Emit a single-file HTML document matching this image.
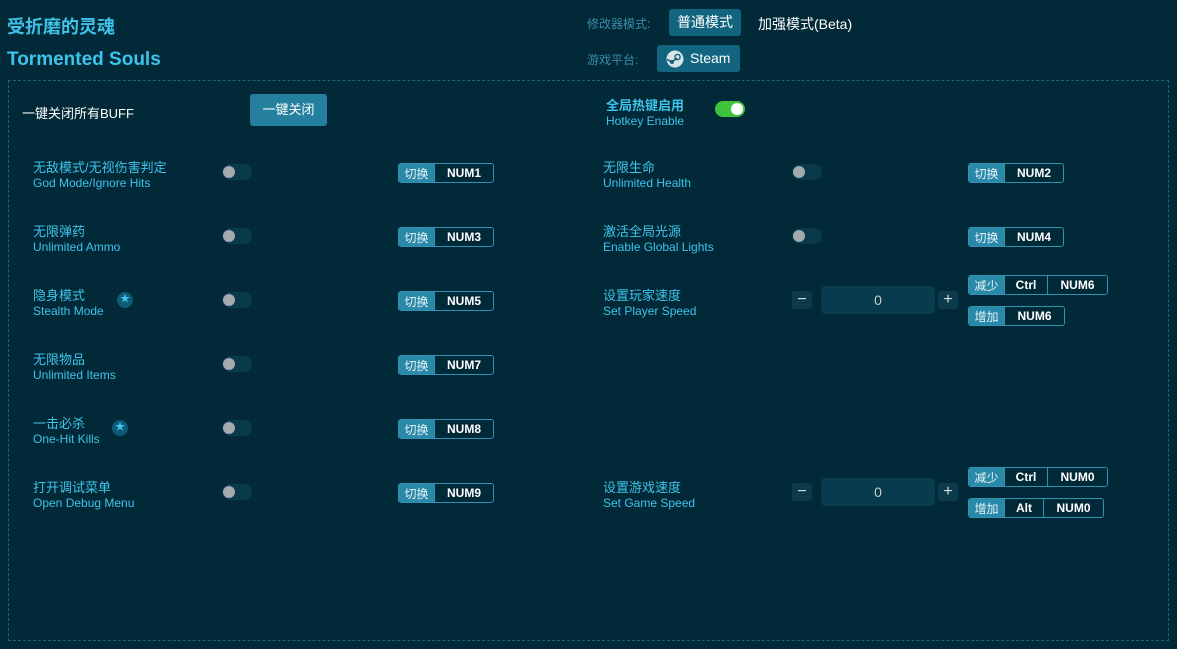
<!DOCTYPE html><html><head><meta charset="utf-8"><style>
*{margin:0;padding:0;box-sizing:border-box}
body{width:1177px;height:649px;background:#022937;font-family:"Liberation Sans","Noto Sans CJK SC",sans-serif;position:relative;overflow:hidden;color:#fff}
.a{position:absolute;white-space:nowrap}
.cy{color:#3fc3ea}
.frame{position:absolute;left:8px;top:80px;width:1161px;height:561px;border:1px dashed #1f6379}
.zh{font-size:13px;color:#3fc3ea}
.en{font-size:12px;color:#3fc3ea}
.tg{position:absolute;width:30px;height:16px;border-radius:8px;background:#083a4b}
.tg:after{content:"";position:absolute;left:1px;top:2px;width:12px;height:12px;border-radius:6px;background:#a3a9ad}
.key{position:absolute;height:20px;display:flex;border:1px solid #2f93b3;border-radius:3px;font-size:12px;font-weight:bold;overflow:hidden}
.key span{display:flex;align-items:center;justify-content:center}
.key .l{background:#2a88a8;color:#e8f4f8;font-weight:normal;width:35px}
.key .v{border-left:1px solid #2f93b3}
.pm{position:absolute;width:20px;height:18px;background:#0b3a4a;border-radius:3px;color:#ddd;font-size:16px;text-align:center;line-height:17px}
.inp{position:absolute;width:114px;height:28px;background:#073b4d;border-radius:4px;color:#ccc;font-size:14px;text-align:center;line-height:28px}
.star{position:absolute;width:16px;height:16px;border-radius:8px;background:#0e5a77;color:#3fc3ea;font-size:10px;text-align:center;line-height:16px}
</style></head><body>
<div class="a cy" style="left:7px;top:13px;font-size:18px;font-weight:bold">受折磨的灵魂</div>
<div class="a cy" style="left:7px;top:49px;font-size:19px;font-weight:bold">Tormented Souls</div>
<div class="a" style="left:587px;top:15px;font-size:12px;color:#3a8ca8">修改器模式:</div>
<div class="a" style="left:669px;top:9px;width:72px;height:27px;background:#12647f;border-radius:3px;font-size:14px;text-align:center;line-height:27px">普通模式</div>
<div class="a" style="left:758px;top:14px;font-size:14px">加强模式(Beta)</div>
<div class="a" style="left:587px;top:51px;font-size:12px;color:#3a8ca8">游戏平台:</div>
<div class="a" style="left:657px;top:45px;width:83px;height:27px;background:#12647f;border-radius:3px;font-size:14px;line-height:27px;padding-left:33px">Steam</div>
<svg class="a" style="left:666px;top:50px" width="18" height="18" viewBox="0 0 18 18"><circle cx="9" cy="9" r="8.5" fill="#d8e4ea"/><circle cx="11.5" cy="7" r="2.6" fill="none" stroke="#12647f" stroke-width="1.4"/><circle cx="6" cy="12" r="2" fill="#12647f"/><path d="M1 9.5L6 12L11 8" stroke="#12647f" stroke-width="1.6" fill="none"/></svg>
<div class="frame"></div>
<div class="a" style="left:22px;top:103px;font-size:13px">一键关闭所有BUFF</div>
<div class="a" style="left:250px;top:94px;width:77px;height:32px;background:#24809e;border-radius:3px;font-size:13px;text-align:center;line-height:32px">一键关闭</div>
<div class="a cy" style="left:606px;top:95px;font-size:13px;font-weight:bold">全局热键启用</div>
<div class="a en" style="left:606px;top:114px">Hotkey Enable</div>
<div class="a" style="left:715px;top:101px;width:30px;height:16px;border-radius:8px;background:#3ec43c"><div style="position:absolute;right:2px;top:2px;width:12px;height:12px;border-radius:6px;background:#fff"></div></div>

<div class="a zh" style="left:33px;top:157px">无敌模式/无视伤害判定</div><div class="a en" style="left:33px;top:176px">God Mode/Ignore Hits</div>
<div class="tg" style="left:222px;top:164px"></div>
<div class="key" style="left:398px;top:163px"><span class="l">切换</span><span class="v" style="width:59px">NUM1</span></div>

<div class="a zh" style="left:33px;top:221px">无限弹药</div><div class="a en" style="left:33px;top:240px">Unlimited Ammo</div>
<div class="tg" style="left:222px;top:228px"></div>
<div class="key" style="left:398px;top:227px"><span class="l">切换</span><span class="v" style="width:59px">NUM3</span></div>

<div class="a zh" style="left:33px;top:285px">隐身模式</div><div class="a en" style="left:33px;top:304px">Stealth Mode</div>
<div class="star" style="left:117px;top:292px">★</div>
<div class="tg" style="left:222px;top:292px"></div>
<div class="key" style="left:398px;top:291px"><span class="l">切换</span><span class="v" style="width:59px">NUM5</span></div>

<div class="a zh" style="left:33px;top:349px">无限物品</div><div class="a en" style="left:33px;top:368px">Unlimited Items</div>
<div class="tg" style="left:222px;top:356px"></div>
<div class="key" style="left:398px;top:355px"><span class="l">切换</span><span class="v" style="width:59px">NUM7</span></div>

<div class="a zh" style="left:33px;top:413px">一击必杀</div><div class="a en" style="left:33px;top:432px">One-Hit Kills</div>
<div class="star" style="left:112px;top:420px">★</div>
<div class="tg" style="left:222px;top:420px"></div>
<div class="key" style="left:398px;top:419px"><span class="l">切换</span><span class="v" style="width:59px">NUM8</span></div>

<div class="a zh" style="left:33px;top:477px">打开调试菜单</div><div class="a en" style="left:33px;top:496px">Open Debug Menu</div>
<div class="tg" style="left:222px;top:484px"></div>
<div class="key" style="left:398px;top:483px"><span class="l">切换</span><span class="v" style="width:59px">NUM9</span></div>

<div class="a zh" style="left:603px;top:157px">无限生命</div><div class="a en" style="left:603px;top:176px">Unlimited Health</div>
<div class="tg" style="left:792px;top:164px"></div>
<div class="key" style="left:968px;top:163px"><span class="l">切换</span><span class="v" style="width:59px">NUM2</span></div>

<div class="a zh" style="left:603px;top:221px">激活全局光源</div><div class="a en" style="left:603px;top:240px">Enable Global Lights</div>
<div class="tg" style="left:792px;top:228px"></div>
<div class="key" style="left:968px;top:227px"><span class="l">切换</span><span class="v" style="width:59px">NUM4</span></div>

<div class="a zh" style="left:603px;top:285px">设置玩家速度</div><div class="a en" style="left:603px;top:304px">Set Player Speed</div>
<div class="pm" style="left:792px;top:291px">−</div><div class="inp" style="left:821px;top:286px">0</div><div class="pm" style="left:938px;top:291px">+</div>
<div class="key" style="left:968px;top:275px"><span class="l">减少</span><span class="v" style="width:43px">Ctrl</span><span class="v" style="width:60px">NUM6</span></div>
<div class="key" style="left:968px;top:306px"><span class="l">增加</span><span class="v" style="width:60px">NUM6</span></div>

<div class="a zh" style="left:603px;top:477px">设置游戏速度</div><div class="a en" style="left:603px;top:496px">Set Game Speed</div>
<div class="pm" style="left:792px;top:483px">−</div><div class="inp" style="left:821px;top:478px">0</div><div class="pm" style="left:938px;top:483px">+</div>
<div class="key" style="left:968px;top:467px"><span class="l">减少</span><span class="v" style="width:43px">Ctrl</span><span class="v" style="width:60px">NUM0</span></div>
<div class="key" style="left:968px;top:498px"><span class="l">增加</span><span class="v" style="width:39px">Alt</span><span class="v" style="width:60px">NUM0</span></div>
</body></html>
